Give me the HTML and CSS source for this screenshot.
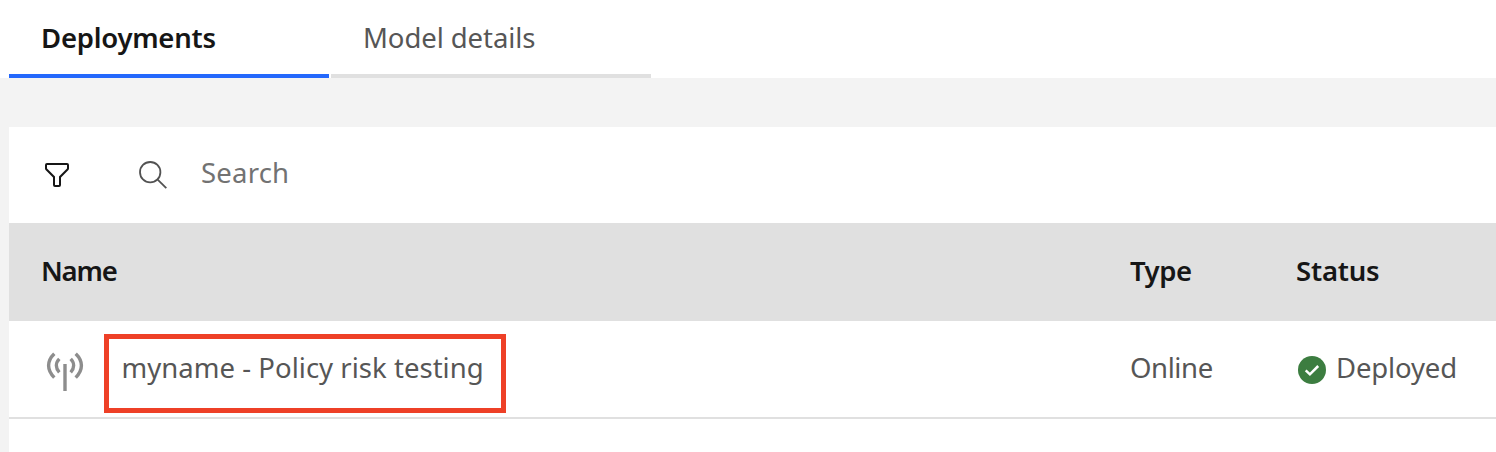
FILE: index.html
```html
<!DOCTYPE html>
<html lang="en">
<head>
<meta charset="utf-8">
<title>Deployments</title>
<link rel="stylesheet" href="styles.css">
</head>
<body>
<nav class="tabs">
  <a class="tab tab-active"><span class="t-deployments">Deployments</span></a>
  <a class="tab"><span class="t-model">Model details</span></a>
</nav>
<main class="panel">
  <div class="toolbar">
    <svg class="icon filter" viewBox="0 0 32 32"><path d="M18 28H14a2 2 0 0 1-2-2V18.41L4.59 11A2 2 0 0 1 4 9.59V6A2 2 0 0 1 6 4H26a2 2 0 0 1 2 2V9.59A2 2 0 0 1 27.41 11L20 18.41V26A2 2 0 0 1 18 28ZM6 6V9.59l8 8V26h4V17.59l8-8V6Z"/></svg>
    <svg class="icon search" viewBox="0 0 32 32"><circle cx="13.2" cy="13.2" r="10.2"/><path d="m20.4 20.4 8.9 8.7"/></svg>
    <span class="placeholder t-search">Search</span>
  </div>
  <div class="row head">
    <div class="cell-name"><span class="t-name">Name</span></div>
    <div><span class="t-type">Type</span></div>
    <div><span class="t-status">Status</span></div>
  </div>
  <div class="row item">
    <div class="cell-name">
      <svg class="antenna" viewBox="0 0 40 40"><path d="M9.3 1.7C1.7 9 1.7 18 9.3 25.6M14.3 6.9c-3.9 4-3.9 9.2 0 13.4M30.7 1.7C38.3 9 38.3 18 30.7 25.6M25.7 6.9c3.9 4 3.9 9.2 0 13.4M20 12V39"/></svg>
      <div class="highlight"><span class="t-policy">myname - Policy risk testing</span></div>
    </div>
    <div class="type"><span class="t-online">Online</span></div>
    <div class="status">
      <svg class="check" viewBox="0 0 28 28"><circle cx="14" cy="14" r="14"/><path d="m7.7 14.3 4.2 4 8.3-8.3"/></svg>
      <span class="t-deployed">Deployed</span>
    </div>
  </div>
</main>
</body>
</html>
```
FILE: styles.css
```css
* { box-sizing: border-box; }
body {
  margin: 0;
  height: 452px;
  overflow: hidden;
  display: flex;
  flex-direction: column;
  background: #f3f3f3;
  color: #565656;
  font: 400 27.5px/36px "Noto Sans", sans-serif;
}
span { white-space: nowrap; }
.tabs {
  display: flex;
  gap: 2px;
  height: 78px;
  padding-left: 9px;
  background: #fff;
}
.tab {
  width: 320px;
  padding: 20px 0 0 32px;
  border-bottom: 4px solid #e0e0e0;
}
.tab-active {
  border-color: #2468fc;
  color: #161616;
  font-weight: 600;
}
.t-deployments { letter-spacing: -0.25px; }
.t-model { letter-spacing: -0.08px; }
.t-search { letter-spacing: 0.2px; }
.t-name { letter-spacing: -1.2px; }
.t-type { letter-spacing: -0.5px; }
.t-status { letter-spacing: -0.2px; }
.t-policy { letter-spacing: 0.03px; }
.t-online { letter-spacing: -0.4px; }
.t-deployed { letter-spacing: -0.15px; }
.panel {
  flex: 1;
  margin: 49px 0 0 9px;
  background: #fff;
}
.toolbar {
  display: flex;
  align-items: center;
  height: 96px;
  padding-left: 32px;
}
.icon { width: 32px; height: 32px; }
.filter { fill: #161616; }
.search {
  margin-left: 64px;
  fill: none;
  stroke: #525252;
  stroke-width: 1.8;
}
.placeholder { margin: -4px 0 0 32px; color: #727272; }
.row {
  display: grid;
  grid-template-columns: 1089px 166px 1fr;
  align-items: center;
  padding-left: 32px;
}
.head {
  height: 98px;
  padding-bottom: 2px;
  background: #e0e0e0;
  color: #161616;
  font-weight: 600;
}
.item {
  height: 98px;
  border-bottom: 2px solid #e0e0e0;
}
.cell-name { display: flex; align-items: center; }
.antenna {
  width: 40px;
  height: 40px;
  margin: 5px 0 0 4px;
  fill: none;
  stroke: #8d8d8d;
  stroke-width: 3.4;
}
.highlight {
  width: 402px;
  height: 79px;
  margin: 8px 0 0 18.5px;
  padding: 11px 0 0 13px;
  border: 5px solid #ee4027;
}
.type { padding-bottom: 2px; }
.status { display: flex; align-items: center; gap: 10px; }
.t-deployed { margin-top: -2px; }
.check { width: 28px; height: 28px; margin: 2px 0 0 2px; fill: #3c7d40; }
.check path { fill: none; stroke: #fff; stroke-width: 2.5; }
```
